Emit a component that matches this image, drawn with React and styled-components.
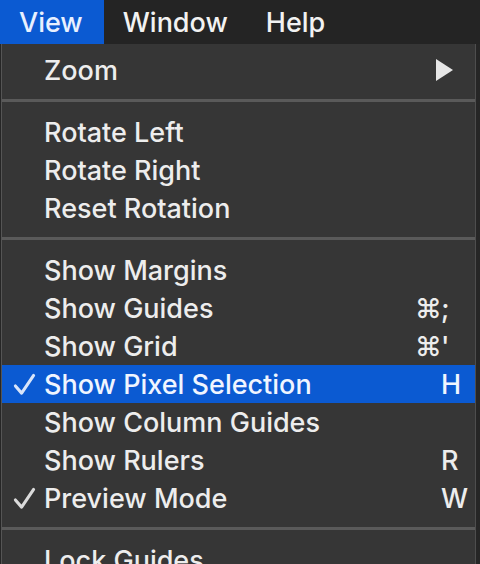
import React from 'react'
import styled, { createGlobalStyle } from 'styled-components'

const GlobalStyle = createGlobalStyle`
  html, body {
    margin: 0;
    padding: 0;
    background: #262626;
    overflow: hidden;
  }
  body {
    font-family: Inter, "Noto Sans", "DejaVu Sans", sans-serif;
    -webkit-font-smoothing: antialiased;
  }
`

const sections = [
  [{ label: 'Zoom', submenu: true }],
  [{ label: 'Rotate Left' }, { label: 'Rotate Right' }, { label: 'Reset Rotation' }],
  [
    { label: 'Show Margins' },
    { label: 'Show Guides', mod: '⌘', key: ';' },
    { label: 'Show Grid', mod: '⌘', key: "'" },
    { label: 'Show Pixel Selection', key: 'H', checked: true, active: true },
    { label: 'Show Column Guides' },
    { label: 'Show Rulers', key: 'R' },
    { label: 'Preview Mode', key: 'W', checked: true },
  ],
  [{ label: 'Lock Guides' }],
]

const Check = () => (
  <CheckIcon viewBox="0 0 24 24">
    <path d="M2.5 13.5 L9 21 L21.5 2.5" />
  </CheckIcon>
)

const Arrow = () => (
  <ArrowIcon viewBox="0 0 17 22">
    <polygon points="0,0 17,11 0,22" />
  </ArrowIcon>
)

const App = () => {
  return (
    <Screen>
      <GlobalStyle />
      <MenuBar>
        <BarItem active>View</BarItem>
        <BarItem>Window</BarItem>
        <BarItem>Help</BarItem>
      </MenuBar>
      <Panel>
        {sections.map((items, i) => (
          <React.Fragment key={i}>
            {i > 0 && <Separator />}
            {items.map(item => (
              <Row key={item.label} active={item.active}>
                <CheckSlot>{item.checked && <Check />}</CheckSlot>
                <Label>{item.label}</Label>
                {item.submenu && <Arrow />}
                {item.key && (
                  <Shortcut>
                    <Mod>{item.mod}</Mod>
                    <Key>{item.key}</Key>
                  </Shortcut>
                )}
              </Row>
            ))}
          </React.Fragment>
        ))}
      </Panel>
    </Screen>
  )
}

const Screen = styled.div`
  width: 480px;
  height: 564px;
  overflow: hidden;
  background: #262626;
`

const MenuBar = styled.div`
  display: flex;
  height: 44px;
  background: #242424;
`

const BarItem = styled.div`
  display: flex;
  align-items: center;
  padding: ${props => props.active ? '0 21px 0 19px' : '0 19px'};
  font-size: 27px;
  font-weight: 500;
  color: ${props => props.active ? '#e8f0ff' : '#f2f2f2'};
  background: ${props => props.active ? '#0b5ad2' : 'transparent'};
`

const Panel = styled.div`
  width: 473px;
  margin-left: 1px;
  padding-top: 7px;
  background: #363636;
  border-left: 1px solid #555;
  border-right: 1px solid #4e4e4e;
`

const Row = styled.div`
  display: flex;
  align-items: center;
  height: 38px;
  padding-right: 6px;
  font-size: 27px;
  font-weight: 500;
  color: ${props => props.active ? '#f0f5ff' : '#ededed'};
  background: ${props => props.active ? '#0b5ad2' : 'transparent'};
`

const CheckSlot = styled.div`
  display: flex;
  align-items: center;
  justify-content: center;
  width: 40px;
  padding-left: 2px;
`

const CheckIcon = styled.svg`
  width: 23px;
  height: 23px;
  fill: none;
  stroke: currentColor;
  stroke-width: 3.2;
  stroke-linecap: round;
  stroke-linejoin: round;
  opacity: 0.9;
`

const ArrowIcon = styled.svg`
  width: 17px;
  height: 22px;
  margin-left: auto;
  margin-right: 16px;
  fill: #e6e6e6;
`

const Label = styled.span`
  white-space: nowrap;
`

const Shortcut = styled.div`
  display: flex;
  margin-left: auto;
`

const Mod = styled.span`
  width: 24px;
  text-align: right;
  margin-right: 2px;
`

const Key = styled.span`
  width: 28px;
  text-align: left;
`

const Separator = styled.div`
  height: 3px;
  margin: 10px 0 11px;
  background: #5a5a5a;
`

export default App
